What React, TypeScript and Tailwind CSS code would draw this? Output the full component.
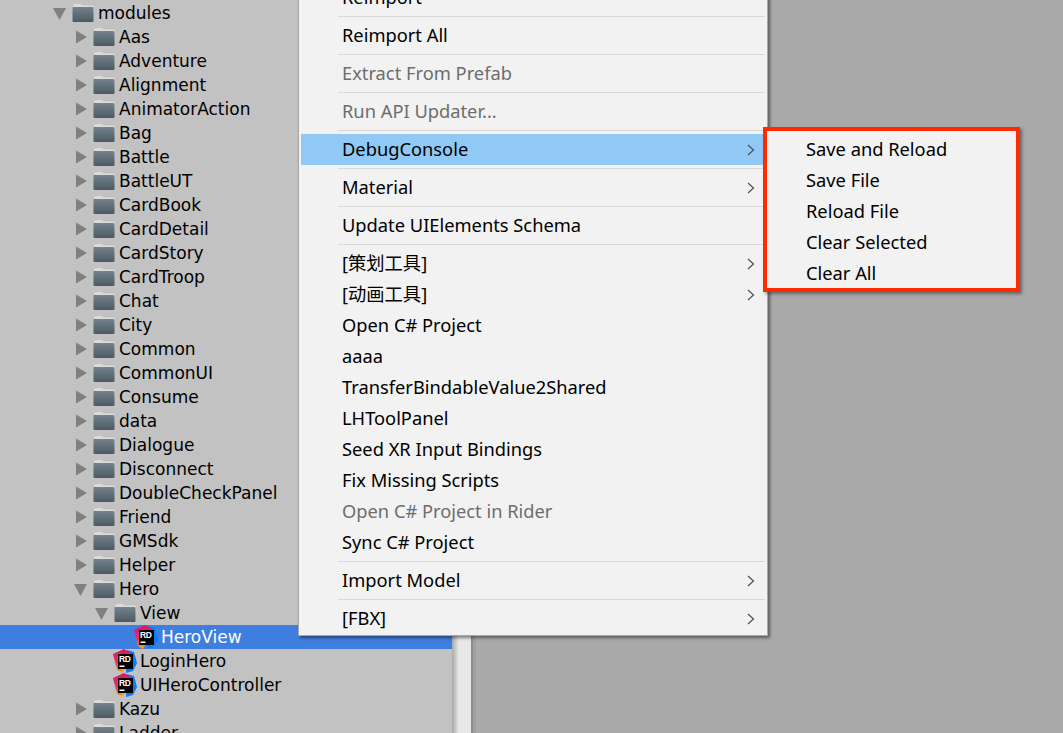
const treeFont = "font-['DejaVu_Sans',sans-serif]"
const menuFont = "font-['Noto_Sans','Noto_Sans_CJK_SC',sans-serif]"

type TreeRow = {
  name: string
  indent: string
  kind: 'closed' | 'open' | 'script'
  selected?: boolean
}

const closedNames = [
  'Aas',
  'Adventure',
  'Alignment',
  'AnimatorAction',
  'Bag',
  'Battle',
  'BattleUT',
  'CardBook',
  'CardDetail',
  'CardStory',
  'CardTroop',
  'Chat',
  'City',
  'Common',
  'CommonUI',
  'Consume',
  'data',
  'Dialogue',
  'Disconnect',
  'DoubleCheckPanel',
  'Friend',
  'GMSdk',
  'Helper',
]

const rows: TreeRow[] = [
  { name: 'modules', indent: 'pl-[53px]', kind: 'open' },
  ...closedNames.map((name): TreeRow => ({ name, indent: 'pl-[74px]', kind: 'closed' })),
  { name: 'Hero', indent: 'pl-[74px]', kind: 'open' },
  { name: 'View', indent: 'pl-[95px]', kind: 'open' },
  { name: 'HeroView', indent: 'pl-[116px]', kind: 'script', selected: true },
  { name: 'LoginHero', indent: 'pl-[95px]', kind: 'script' },
  { name: 'UIHeroController', indent: 'pl-[95px]', kind: 'script' },
  { name: 'Kazu', indent: 'pl-[74px]', kind: 'closed' },
  { name: 'Ladder', indent: 'pl-[74px]', kind: 'closed' },
]

type MenuEntry =
  | { sep: true }
  | { sep?: false; label: string; disabled?: boolean; active?: boolean; sub?: boolean }

const menu: MenuEntry[] = [
  { label: 'Reimport' },
  { sep: true },
  { label: 'Reimport All' },
  { sep: true },
  { label: 'Extract From Prefab', disabled: true },
  { sep: true },
  { label: 'Run API Updater...', disabled: true },
  { sep: true },
  { label: 'DebugConsole', active: true, sub: true },
  { sep: true },
  { label: 'Material', sub: true },
  { sep: true },
  { label: 'Update UIElements Schema' },
  { sep: true },
  { label: '[策划工具]', sub: true },
  { label: '[动画工具]', sub: true },
  { label: 'Open C# Project' },
  { label: 'aaaa' },
  { label: 'TransferBindableValue2Shared' },
  { label: 'LHToolPanel' },
  { label: 'Seed XR Input Bindings' },
  { label: 'Fix Missing Scripts' },
  { label: 'Open C# Project in Rider', disabled: true },
  { label: 'Sync C# Project' },
  { sep: true },
  { label: 'Import Model', sub: true },
  { sep: true },
  { label: '[FBX]', sub: true },
]

const subItems = ['Save and Reload', 'Save File', 'Reload File', 'Clear Selected', 'Clear All']

function Arrow({ open }: { open: boolean }) {
  return (
    <svg width="19" height="24" viewBox="0 0 19 24" className="shrink-0">
      {open ? <path d="M0 7h13l-6.500 12z" fill="#808080" /> : <path d="M2 5.500l11 6.500-11 6.500z" fill="#808080" />}
    </svg>
  )
}

function Folder({ id }: { id: string }) {
  return (
    <svg width="26" height="24" viewBox="0 0 26 24" className="shrink-0">
      <defs>
        <linearGradient id={id} x1="0" y1="0" x2="0" y2="1">
          <stop offset="0" stopColor="#73828c" />
          <stop offset="1" stopColor="#4b5a62" />
        </linearGradient>
      </defs>
      <path d="M1.500 4.500q0-1.500 1.500-1.500h5q1.500 0 2 1.500h10.500q1.500 0 1.500 1.500v6h-20.500z" fill="#dcdcdc" />
      <rect x="0.500" y="6" width="21" height="15" rx="1" fill={`url(#${id})`} />
    </svg>
  )
}

function RiderIcon({ id }: { id: string }) {
  return (
    <svg width="27" height="24" viewBox="0 0 27 24" className="shrink-0">
      <defs>
        <linearGradient id={id} x1="0" y1="0" x2="0" y2="1">
          <stop offset="0" stopColor="#dd1265" />
          <stop offset="0.600" stopColor="#e8336a" />
          <stop offset="1" stopColor="#fdb60d" />
        </linearGradient>
      </defs>
      <path d="M14 1l7 2 3 11-4 8-7 2z" fill="#087cfa" />
      <path d="M0 5l11-5 7 4-4 11-5 9-5-3-2-8z" fill={`url(#${id})`} />
      <rect x="5" y="5" width="15" height="15" fill="#000000" />
      <text x="6" y="12.500" fontSize="8.500" fontWeight="700" fill="#ffffff" fontFamily="Liberation Sans, sans-serif" letterSpacing="-0.5">
        RD
      </text>
      <rect x="6.500" y="16.500" width="5" height="1.500" fill="#ffffff" />
    </svg>
  )
}

function Chevron() {
  return (
    <svg width="8" height="12" viewBox="0 0 8 12" className="shrink-0" fill="none" stroke="#505050" strokeWidth="1.200">
      <path d="M1 1l5.500 5-5.500 5" />
    </svg>
  )
}

function ContextMenu() {
  return (
    <div className={`absolute left-[298px] top-[-20px] w-[470px] border border-[#a8a8a8] bg-[#f2f2f2] px-[2px] py-px shadow-[2px_2px_3px_rgba(0,0,0,0.45)] ${menuFont}`}>
      {menu.map((item, i) =>
        item.sep ? (
          <div key={i} className="py-[3px] pl-[37px]">
            <div className="h-px bg-[#d7d7d7]" />
          </div>
        ) : (
          <div
            key={i}
            className={`flex h-[31px] items-center justify-between pl-[41px] pr-[10px] text-[18.3px] leading-none ${
              item.active ? 'bg-[#90c8f6]' : ''
            } ${item.disabled ? 'text-[#6d6d6d]' : 'text-black'}`}
          >
            <span>{item.label}</span>
            {item.sub && <Chevron />}
          </div>
        ),
      )}
    </div>
  )
}

function SubMenu() {
  return (
    <div className={`absolute left-[763px] top-[127px] w-[257px] border-[4px] border-[#ff2a00] bg-[#f2f2f2] pt-[2px] pl-[39px] shadow-[2px_2px_3px_rgba(0,0,0,0.4)] ${menuFont}`}>
      {subItems.map((label) => (
        <div key={label} className="flex h-[31px] items-center text-[18.3px] leading-none text-black">
          <span className="pt-[2px]">{label}</span>
        </div>
      ))}
    </div>
  )
}

export default function App() {
  return (
    <div className="relative flex h-[733px] w-[1063px] overflow-hidden bg-[#a9a9a9]">
      <div className={`w-[452px] shrink-0 bg-[#c2c2c2] pt-px ${treeFont}`}>
        {rows.map((row) => (
          <div
            key={row.name}
            className={`flex h-6 items-center text-[17px] ${row.indent} ${
              row.selected ? 'bg-[#3e7ee0] text-white' : 'text-black'
            }`}
          >
            {row.kind === 'script' ? <span className="w-[18px] shrink-0" /> : <Arrow open={row.kind === 'open'} />}
            {row.kind === 'script' ? <RiderIcon id={`rd-${row.name}`} /> : <Folder id={`f-${row.name}`} />}
            <span className="pt-[2px]">{row.name}</span>
          </div>
        ))}
      </div>
      <div className="w-[19px] shrink-0 bg-gradient-to-r from-[#a8a8a8] via-[#e8e8e8] via-35% to-[#e8e8e8]" />
      <div className="w-[2px] shrink-0 bg-[#8c8c8c]" />
      <div className="w-[3px] shrink-0 bg-[#a0a0a0]" />
      <ContextMenu />
      <SubMenu />
    </div>
  )
}
